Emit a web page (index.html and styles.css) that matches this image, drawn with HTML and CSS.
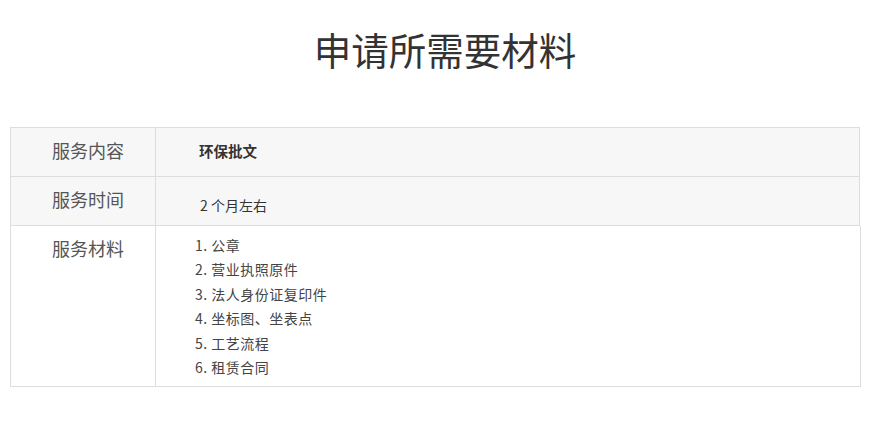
FILE: index.html
```html
<!DOCTYPE html>
<html lang="zh-CN">
<head>
<meta charset="utf-8">
<link rel="stylesheet" href="styles.css">
</head>
<body>
<h1 class="title">申请所需要材料</h1>
<div class="table">
  <div class="row shaded">
    <div class="label">服务内容</div>
    <div class="value bold">环保批文</div>
  </div>
  <div class="row shaded">
    <div class="label">服务时间</div>
    <div class="value time">2 个月左右</div>
  </div>
  <div class="row last">
    <div class="label top">服务材料</div>
    <div class="value list">
      <div>1. 公章</div>
      <div>2. 营业执照原件</div>
      <div>3. 法人身份证复印件</div>
      <div>4. 坐标图、坐表点</div>
      <div>5. 工艺流程</div>
      <div>6. 租赁合同</div>
    </div>
  </div>
</div>
</body>
</html>
```
FILE: styles.css
```css
* { box-sizing: border-box; }
body {
  margin: 0;
  background: #fff;
  font-family: "Noto Sans CJK SC", "Noto Sans", sans-serif;
  color: #333;
}
.title {
  margin: 0;
  padding-top: 24px;
  padding-left: 16px;
  height: 127px;
  text-align: center;
  font-size: 37.5px;
  font-weight: 400;
  line-height: 50px;
  color: #333;
}
.table {
  margin-left: 10px;
  width: 850px;
  border-top: 1px solid #ddd;
}
.row {
  display: flex;
  border-left: 1px solid #ddd;
  border-right: 1px solid #ddd;
  border-bottom: 1px solid #ddd;
  height: 49px;
}
.row.shaded { background: #f7f7f7; }
.row.last {
  height: 161px;
  width: 851px;
}
.label {
  width: 145px;
  flex: none;
  border-right: 1px solid #ddd;
  display: flex;
  align-items: center;
  padding-left: 41px;
  padding-bottom: 4px;
  font-size: 18px;
  color: #555;
}
.label.top {
  align-items: flex-start;
  padding-top: 9px;
}
.value {
  flex: 1;
  display: flex;
  align-items: center;
  padding-left: 43px;
  padding-bottom: 4px;
  font-size: 14.5px;
  color: #333;
}
.value.bold { font-weight: 700; }
.value.time { padding-left: 44px; padding-top: 7px; padding-bottom: 0; font-size: 14px; }
.value.list {
  display: block;
  padding-left: 39px;
  padding-top: 7px;
  line-height: 24.4px;
  font-size: 14px;
  letter-spacing: 0.5px;
  color: #444;
}
```
